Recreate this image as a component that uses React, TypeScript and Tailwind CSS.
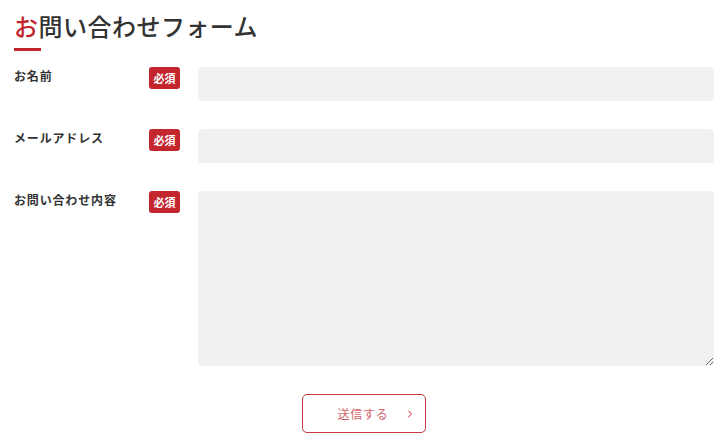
import { ChevronRight } from "lucide-react";

const font = { fontFamily: '"Noto Sans CJK JP", "Noto Sans", sans-serif' };

function Badge() {
  return (
    <span className="flex h-[22px] w-[31px] shrink-0 items-center justify-center rounded-[3px] bg-[#c4262e] text-[11px] font-bold text-white">
      必須
    </span>
  );
}

function Row({ label, tall }: { label: string; tall?: boolean }) {
  return (
    <div className="flex items-start">
      <div className="w-[135px] shrink-0 text-[12px] font-bold leading-[18px] tracking-[0.07em] text-[#333]">
        {label}
      </div>
      <Badge />
      <div className="ml-[18px] flex-1">
        {tall ? (
          <textarea className="block h-[175px] w-full resize-y rounded-[4px] bg-[#f1f1f1] outline-none" />
        ) : (
          <input className="block h-[34px] w-full rounded-[4px] bg-[#f1f1f1] outline-none" />
        )}
      </div>
    </div>
  );
}

export default function App() {
  return (
    <main className="h-[446px] w-[728px] bg-white" style={font}>
      <div className="pl-[14px] pr-[14px] pt-[11px]">
        {/* title */}
        <h1 className="text-[24px] font-medium leading-[30px] tracking-[0.02em] text-[#333]">
          <span className="text-[#c4262e]">お</span>問い合わせフォーム
        </h1>
        <div className="mt-[7px] h-[3px] w-[27px] bg-[#c4262e]"></div>

        <div className="mt-[16px] flex flex-col gap-[28px]">
          <Row label="お名前" />
          <Row label="メールアドレス" />
          <Row label="お問い合わせ内容" tall />
        </div>
      </div>

      <div className="mt-[28px] flex justify-center">
        <button className="relative flex h-[39px] w-[124px] items-center justify-center rounded-[5px] border border-[#c9393f] pr-[2px] text-[12px] tracking-[0.06em] text-[#d06266]">
          送信する
          <ChevronRight className="absolute right-[9px] h-[12px] w-[12px] text-[#c4262e]" strokeWidth={2} />
        </button>
      </div>
    </main>
  );
}
